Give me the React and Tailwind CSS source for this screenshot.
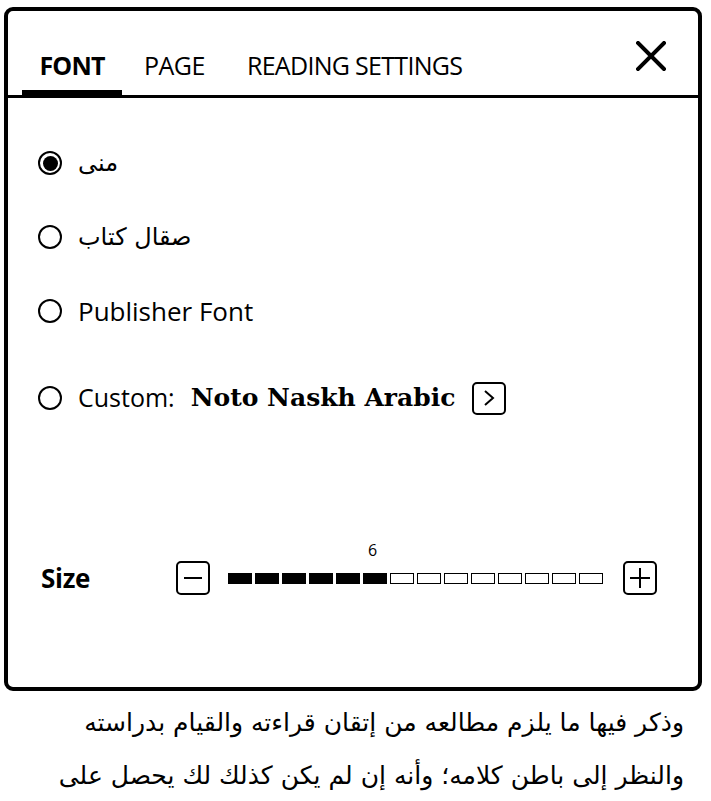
import React from 'react';

const Radio = ({ checked }) => (
  <div className="w-[24px] h-[24px] rounded-full border-[2px] border-black flex items-center justify-center shrink-0">
    {checked && <div className="w-[15px] h-[15px] rounded-full bg-black"></div>}
  </div>
);

const App = () => {
  const level = 6;
  const segments = Array.from({ length: 14 }, (_, i) => i < level);

  return (
    <div className="w-[711px] h-[801px] bg-white overflow-hidden text-black" style={{ fontFamily: '"Open Sans", "Noto Sans", sans-serif' }}>
      {/* Settings panel */}
      <div className="ml-[4px] mt-[7px] w-[698px] h-[684px] border-[4px] border-black rounded-[9px] bg-white flex flex-col">
        {/* Tabs */}
        <div className="relative flex items-end h-[87px] border-b-[3px] border-black">
          <div className="flex items-end pl-[14px]">
            <div className="w-[100px] flex flex-col items-center">
              <span className="text-[25px] font-bold tracking-[-0.8px] leading-none mb-[12px]">FONT</span>
              <div className="w-full h-[5px] bg-black"></div>
            </div>
            <span className="ml-[22px] text-[25px] leading-none mb-[17px] tracking-[-0.5px]">PAGE</span>
            <span className="ml-[42px] text-[25px] leading-none mb-[17px] tracking-[-0.7px]">READING SETTINGS</span>
          </div>
          <svg className="absolute left-[628px] top-[30px]" width="30" height="30" viewBox="0 0 30 30">
            <path d="M2 2 L28 28 M28 2 L2 28" stroke="black" strokeWidth="4" strokeLinecap="square" />
          </svg>
        </div>

        {/* Font options */}
        <div className="flex flex-col pl-[30px]">
          <div className="flex items-center h-[40px] mt-[45px] gap-[16px]">
            <Radio checked />
            <span className="text-[24px]" style={{ fontFamily: '"DejaVu Sans", sans-serif' }}>منى</span>
          </div>
          <div className="flex items-center h-[40px] mt-[34px] gap-[16px]">
            <Radio />
            <span className="text-[24px]" style={{ fontFamily: '"DejaVu Sans", sans-serif' }}>صقال كتاب</span>
          </div>
          <div className="flex items-center h-[40px] mt-[34px] gap-[16px]">
            <Radio />
            <span className="text-[26px]">Publisher Font</span>
          </div>
          <div className="flex items-center h-[40px] mt-[47px] gap-[16px]">
            <Radio />
            <span className="text-[25px]">Custom:</span>
            <span className="text-[25px] font-bold" style={{ fontFamily: '"DejaVu Serif", serif' }}>Noto Naskh Arabic</span>
            <div className="ml-[1px] w-[34px] h-[33px] rounded-[5px] border-[2px] border-black flex items-center justify-center">
              <svg width="14" height="18" viewBox="0 0 14 18">
                <path d="M3 2 L11 9 L3 16" fill="none" stroke="black" strokeWidth="2" />
              </svg>
            </div>
          </div>
        </div>

        {/* Size */}
        <div className="flex items-center h-[40px] mt-[140px] pl-[33px]">
          <span className="w-[135px] text-[26px] font-bold tracking-[-0.3px]">Size</span>
          <div className="w-[34px] h-[34px] rounded-[5px] border-[2px] border-black flex items-center justify-center">
            <div className="w-[18px] h-[2px] bg-black"></div>
          </div>
          <div className="relative flex gap-[3px] ml-[18px]">
            {segments.map((on, i) => (
              <div key={i} className={`w-[24px] h-[11px] border-[1.5px] border-black ${on ? 'bg-black' : 'bg-white'}`}></div>
            ))}
            <span className="absolute left-[140px] top-[-35px] text-[16px]">6</span>
          </div>
          <div className="ml-[20px] w-[34px] h-[34px] rounded-[5px] border-[2px] border-black flex items-center justify-center relative">
            <div className="w-[20px] h-[2px] bg-black"></div>
            <div className="absolute w-[2px] h-[20px] bg-black"></div>
          </div>
        </div>
      </div>

      {/* Book text */}
      <div dir="rtl" className="pr-[27px] pt-[5px] text-[25px] leading-[53px]" style={{ fontFamily: '"DejaVu Sans", sans-serif' }}>
        <p>وذكر فيها ما يلزم مطالعه من إتقان قراءته والقيام بدراسته</p>
        <p>والنظر إلى باطن كلامه؛ وأنه إن لم يكن كذلك لك يحصل على</p>
      </div>
    </div>
  );
};

export default App;
